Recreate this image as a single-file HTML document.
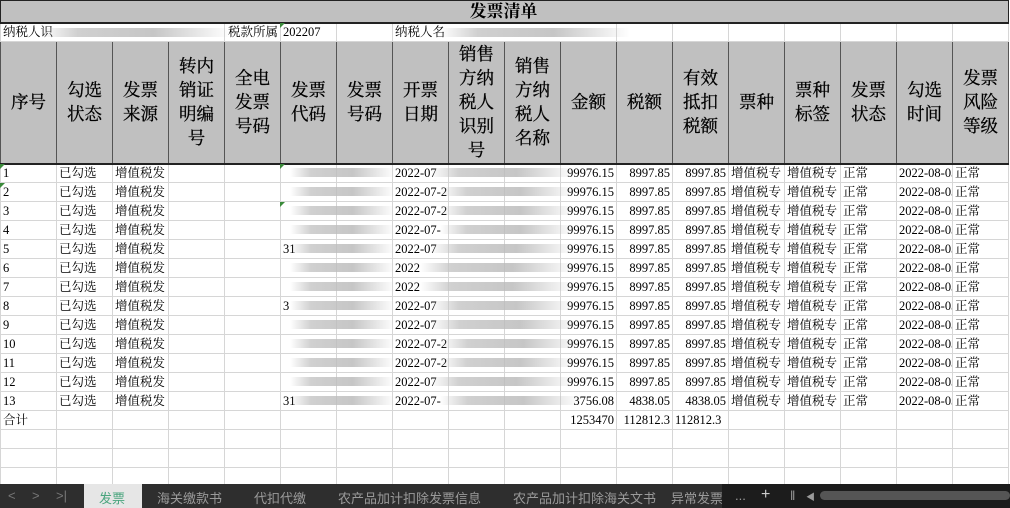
<!DOCTYPE html>
<html><head><meta charset="utf-8"><style>
*{margin:0;padding:0;box-sizing:border-box}
body{width:1010px;height:508px;overflow:hidden;background:#fff;position:relative;font-family:"Liberation Serif","Noto Serif CJK SC",serif;color:#000}
table{position:absolute;left:0;top:0;border-collapse:collapse;table-layout:fixed;width:1008px}
td{border:1px solid #d6d6d6;font-size:12.5px;height:19px;line-height:17px;padding:0 2px;white-space:nowrap;overflow:hidden}
.t td{background:#c0c0c0;font-size:17px;font-weight:bold;text-align:center;height:22px;border:1px solid #222;border-bottom:2px solid #222}
.h td{background:#c0c0c0;font-size:17.5px;text-align:center;height:122px;line-height:24px;white-space:normal;border:1px solid #555;border-bottom:2px solid #222;padding:0 8px;-webkit-text-stroke:0.3px #000}
.r{text-align:right}
.bl{position:absolute;height:9px;background:linear-gradient(90deg,rgba(255,255,255,0),#c4c4c4 20%,#b8b8b8 60%,rgba(255,255,255,0));opacity:.8}
.tab{position:absolute;top:484px;left:0;width:1010px;height:24px;background:#2e2e2e;color:#9a9a9a;font-family:"Liberation Sans","Noto Sans CJK SC",sans-serif;font-size:13px}
.tab span{position:absolute;top:4px}
.tri{position:absolute;width:0;height:0;border-left:5px solid #3a8a3a;border-bottom:5px solid transparent}
</style></head><body>
<table>
<colgroup><col span="18" style="width:56px"></colgroup>
<tr class="t"><td colspan="18" style="padding-left:0">发票清单</td></tr>
<tr><td colspan="4">纳税人识</td><td style="text-align:right">税款所属</td><td>202207</td><td></td><td colspan="4">纳税人名</td><td></td><td></td><td></td><td></td><td></td><td></td><td></td></tr>
<tr class="h"><td>序号</td><td>勾选状态</td><td>发票来源</td><td>转内销证明编号</td><td>全电发票号码</td><td>发票代码</td><td>发票号码</td><td>开票日期</td><td style="padding:0 4px">销售方纳税人识别号</td><td style="padding:0 4px">销售方纳税人名称</td><td>金额</td><td>税额</td><td>有效抵扣税额</td><td>票种</td><td>票种标签</td><td>发票状态</td><td>勾选时间</td><td>发票风险等级</td></tr>
<tr><td>1</td><td>已勾选</td><td>增值税发</td><td></td><td></td><td></td><td></td><td>2022-07</td><td></td><td></td><td class="r">99976.15</td><td class="r">8997.85</td><td class="r">8997.85</td><td>增值税专</td><td>增值税专</td><td>正常</td><td>2022-08-03</td><td>正常</td></tr>
<tr><td>2</td><td>已勾选</td><td>增值税发</td><td></td><td></td><td></td><td></td><td>2022-07-2</td><td></td><td></td><td class="r">99976.15</td><td class="r">8997.85</td><td class="r">8997.85</td><td>增值税专</td><td>增值税专</td><td>正常</td><td>2022-08-03</td><td>正常</td></tr>
<tr><td>3</td><td>已勾选</td><td>增值税发</td><td></td><td></td><td></td><td></td><td>2022-07-2</td><td></td><td></td><td class="r">99976.15</td><td class="r">8997.85</td><td class="r">8997.85</td><td>增值税专</td><td>增值税专</td><td>正常</td><td>2022-08-03</td><td>正常</td></tr>
<tr><td>4</td><td>已勾选</td><td>增值税发</td><td></td><td></td><td></td><td></td><td>2022-07-</td><td></td><td></td><td class="r">99976.15</td><td class="r">8997.85</td><td class="r">8997.85</td><td>增值税专</td><td>增值税专</td><td>正常</td><td>2022-08-03</td><td>正常</td></tr>
<tr><td>5</td><td>已勾选</td><td>增值税发</td><td></td><td></td><td>31</td><td></td><td>2022-07</td><td></td><td></td><td class="r">99976.15</td><td class="r">8997.85</td><td class="r">8997.85</td><td>增值税专</td><td>增值税专</td><td>正常</td><td>2022-08-03</td><td>正常</td></tr>
<tr><td>6</td><td>已勾选</td><td>增值税发</td><td></td><td></td><td></td><td></td><td>2022</td><td></td><td></td><td class="r">99976.15</td><td class="r">8997.85</td><td class="r">8997.85</td><td>增值税专</td><td>增值税专</td><td>正常</td><td>2022-08-03</td><td>正常</td></tr>
<tr><td>7</td><td>已勾选</td><td>增值税发</td><td></td><td></td><td></td><td></td><td>2022</td><td></td><td></td><td class="r">99976.15</td><td class="r">8997.85</td><td class="r">8997.85</td><td>增值税专</td><td>增值税专</td><td>正常</td><td>2022-08-03</td><td>正常</td></tr>
<tr><td>8</td><td>已勾选</td><td>增值税发</td><td></td><td></td><td>3</td><td></td><td>2022-07</td><td></td><td></td><td class="r">99976.15</td><td class="r">8997.85</td><td class="r">8997.85</td><td>增值税专</td><td>增值税专</td><td>正常</td><td>2022-08-03</td><td>正常</td></tr>
<tr><td>9</td><td>已勾选</td><td>增值税发</td><td></td><td></td><td></td><td></td><td>2022-07</td><td></td><td></td><td class="r">99976.15</td><td class="r">8997.85</td><td class="r">8997.85</td><td>增值税专</td><td>增值税专</td><td>正常</td><td>2022-08-03</td><td>正常</td></tr>
<tr><td>10</td><td>已勾选</td><td>增值税发</td><td></td><td></td><td></td><td></td><td>2022-07-2</td><td></td><td></td><td class="r">99976.15</td><td class="r">8997.85</td><td class="r">8997.85</td><td>增值税专</td><td>增值税专</td><td>正常</td><td>2022-08-03</td><td>正常</td></tr>
<tr><td>11</td><td>已勾选</td><td>增值税发</td><td></td><td></td><td></td><td></td><td>2022-07-2</td><td></td><td></td><td class="r">99976.15</td><td class="r">8997.85</td><td class="r">8997.85</td><td>增值税专</td><td>增值税专</td><td>正常</td><td>2022-08-03</td><td>正常</td></tr>
<tr><td>12</td><td>已勾选</td><td>增值税发</td><td></td><td></td><td></td><td></td><td>2022-07</td><td></td><td></td><td class="r">99976.15</td><td class="r">8997.85</td><td class="r">8997.85</td><td>增值税专</td><td>增值税专</td><td>正常</td><td>2022-08-03</td><td>正常</td></tr>
<tr><td>13</td><td>已勾选</td><td>增值税发</td><td></td><td></td><td>31</td><td></td><td>2022-07-</td><td></td><td></td><td class="r">3756.08</td><td class="r">4838.05</td><td class="r">4838.05</td><td>增值税专</td><td>增值税专</td><td>正常</td><td>2022-08-03</td><td>正常</td></tr>
<tr><td>合计</td><td></td><td></td><td></td><td></td><td></td><td></td><td></td><td></td><td></td><td class="r">1253470</td><td class="r">112812.3</td><td>112812.3</td><td></td><td></td><td></td><td></td><td></td></tr>
<tr><td></td><td></td><td></td><td></td><td></td><td></td><td></td><td></td><td></td><td></td><td></td><td></td><td></td><td></td><td></td><td></td><td></td><td></td></tr>
<tr><td></td><td></td><td></td><td></td><td></td><td></td><td></td><td></td><td></td><td></td><td></td><td></td><td></td><td></td><td></td><td></td><td></td><td></td></tr>
<tr><td></td><td></td><td></td><td></td><td></td><td></td><td></td><td></td><td></td><td></td><td></td><td></td><td></td><td></td><td></td><td></td><td></td><td></td></tr>
</table>
<div class="bl" style="left:40px;top:28px;width:190px"></div>
<div class="bl" style="left:440px;top:28px;width:190px"></div>
<div class="bl" style="left:290px;top:168px;width:105px"></div><div class="bl" style="left:430px;top:168px;width:145px"></div>
<div class="bl" style="left:290px;top:187px;width:105px"></div><div class="bl" style="left:440px;top:187px;width:135px"></div>
<div class="bl" style="left:290px;top:206px;width:105px"></div><div class="bl" style="left:440px;top:206px;width:135px"></div>
<div class="bl" style="left:290px;top:225px;width:105px"></div><div class="bl" style="left:440px;top:225px;width:135px"></div>
<div class="bl" style="left:290px;top:244px;width:105px"></div><div class="bl" style="left:430px;top:244px;width:145px"></div>
<div class="bl" style="left:290px;top:263px;width:105px"></div><div class="bl" style="left:420px;top:263px;width:155px"></div>
<div class="bl" style="left:290px;top:282px;width:105px"></div><div class="bl" style="left:420px;top:282px;width:155px"></div>
<div class="bl" style="left:290px;top:301px;width:105px"></div><div class="bl" style="left:430px;top:301px;width:145px"></div>
<div class="bl" style="left:290px;top:320px;width:105px"></div><div class="bl" style="left:430px;top:320px;width:150px"></div>
<div class="bl" style="left:290px;top:339px;width:105px"></div><div class="bl" style="left:440px;top:339px;width:140px"></div>
<div class="bl" style="left:290px;top:358px;width:105px"></div><div class="bl" style="left:440px;top:358px;width:135px"></div>
<div class="bl" style="left:290px;top:377px;width:105px"></div><div class="bl" style="left:430px;top:377px;width:145px"></div>
<div class="bl" style="left:290px;top:396px;width:105px"></div><div class="bl" style="left:440px;top:396px;width:140px"></div>
<div class="tri" style="left:0;top:164px"></div><div class="tri" style="left:0;top:183px"></div><div class="tri" style="left:280px;top:164px"></div><div class="tri" style="left:280px;top:23px"></div><div class="tri" style="left:280px;top:202px"></div>
<div class="tab">
<span style="left:8px;color:#777">&lt;</span><span style="left:32px;color:#777">&gt;</span><span style="left:56px;color:#777">&gt;|</span>
<div style="position:absolute;left:84px;top:0;width:58px;height:24px;background:#e6e6e6"></div>
<span style="left:99px;color:#4aa57e">发票</span>
<span style="left:157px">海关缴款书</span>
<span style="left:254px">代扣代缴</span>
<span style="left:338px">农产品加计扣除发票信息</span>
<span style="left:513px">农产品加计扣除海关文书</span>
<span style="left:671px">异常发票</span>
<div style="position:absolute;left:722px;top:0;width:288px;height:24px;background:#1c1c1c"></div>
<span style="left:735px">...</span><span style="left:761px;color:#ccc;font-size:16px;top:2px">+</span><span style="left:790px">‖</span><span style="left:806px;font-size:9px;top:6px">◀</span>
<div style="position:absolute;left:820px;top:7px;width:190px;height:9px;background:#555;border-radius:5px"></div>
</div>
</body></html>
